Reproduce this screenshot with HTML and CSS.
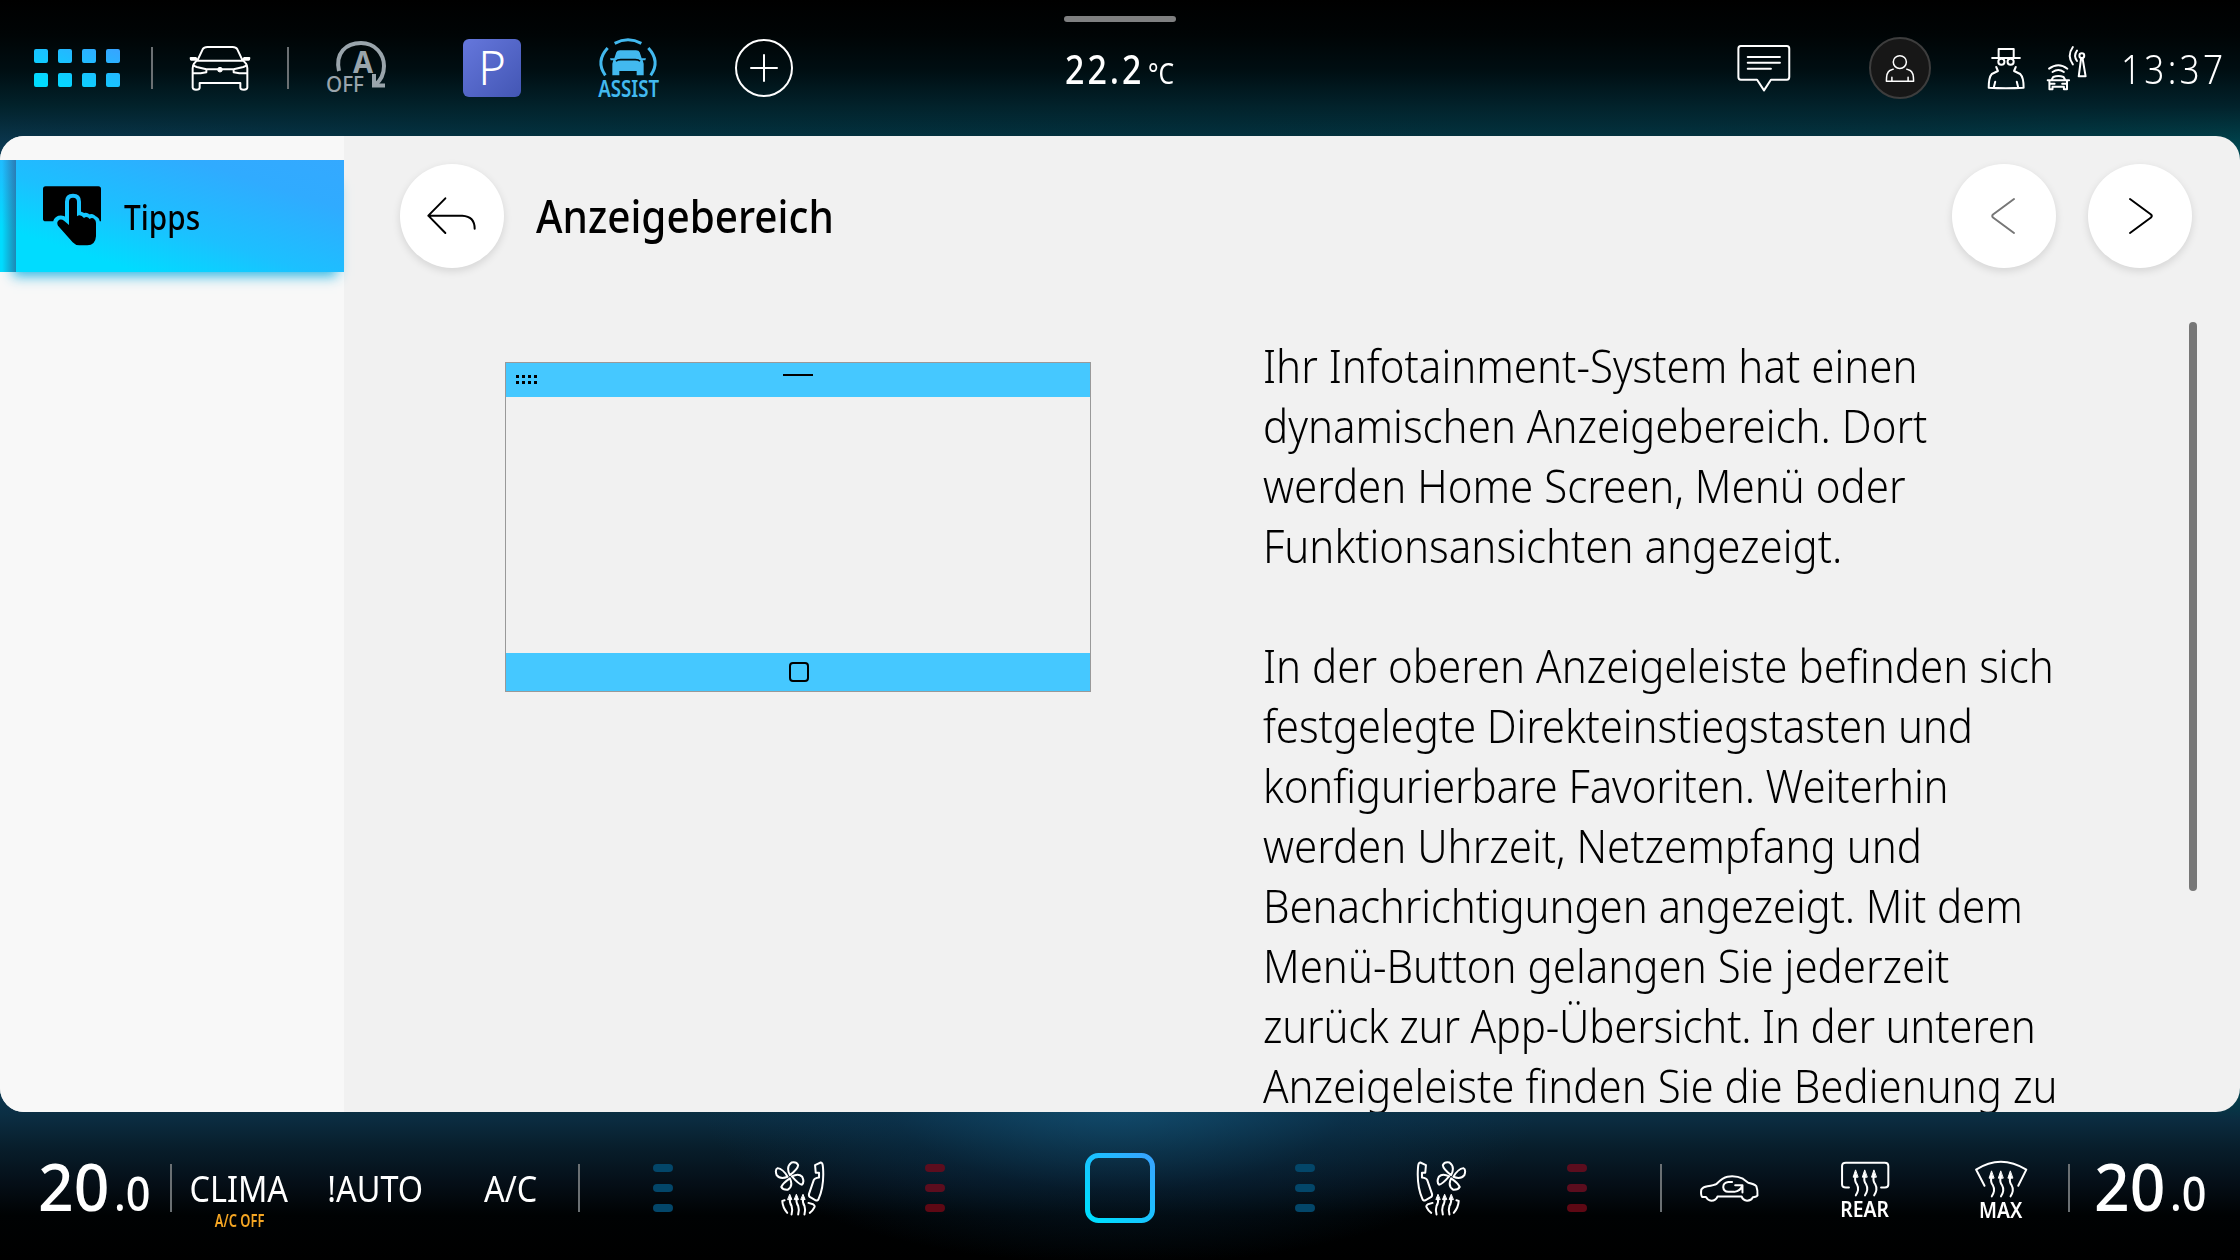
FILE: index.html
```html
<!DOCTYPE html>
<html lang="de">
<head>
<meta charset="utf-8">
<title>Tipps – Anzeigebereich</title>
<link rel="stylesheet" href="styles.css">
</head>
<body>
<svg class="defs" aria-hidden="true">
  <defs>
    <linearGradient id="accent" x1="0" y1="1" x2="1" y2="0">
      <stop offset="0.1" stop-color="#00dcff"/><stop offset="1" stop-color="#38a3ff"/>
    </linearGradient>
    <symbol id="seat" viewBox="528 212 154 168">
      <path d="M541 219Q535 218 534 235Q530 290 547 328Q550 336 556 333L574 323Q578 319 576 313L562 272Q560 266 546 264V250H556L558 227Z"/>
      <path d="M634 257Q610 239 609 227Q614 216 629 219Q647 232 634 257ZM641 262Q655 238 671 236Q680 240 674 257Q663 271 641 262ZM634 267Q655 281 660 293Q655 302 640 301Q623 290 634 267ZM628 261Q606 286 598 286Q589 278 597 262Q608 250 628 261Z"/>
      <path d="M594 326Q597 340 590 350Q586 362 590 376M614 326Q616 340 609 350Q605 362 609 376M634 326Q636 340 629 350Q625 362 629 376"/>
      <path class="solid" d="M594 316L588 331H600ZM614 316L608 331H620ZM634 316L628 331H640Z"/>
      <path d="M578 341L564 345Q557 350 560 354Q566 366 574 371M650 333L657 335Q656 355 642 371"/>
    </symbol>
  </defs>
</svg>

<div class="screen">
  <header class="topbar">
    <nav class="shortcuts">
      <div class="cell first">
        <svg width="86" height="38" viewBox="0 0 86 38"><path fill="url(#accent)" d="M2 0h10q2 0 2 2v10q0 2-2 2h-10q-2 0-2-2v-10q0-2 2-2zM26 0h10q2 0 2 2v10q0 2-2 2h-10q-2 0-2-2v-10q0-2 2-2zM50 0h10q2 0 2 2v10q0 2-2 2h-10q-2 0-2-2v-10q0-2 2-2zM74 0h10q2 0 2 2v10q0 2-2 2h-10q-2 0-2-2v-10q0-2 2-2zM2 24h10q2 0 2 2v10q0 2-2 2h-10q-2 0-2-2v-10q0-2 2-2zM26 24h10q2 0 2 2v10q0 2-2 2h-10q-2 0-2-2v-10q0-2 2-2zM50 24h10q2 0 2 2v10q0 2-2 2h-10q-2 0-2-2v-10q0-2 2-2zM74 24h10q2 0 2 2v10q0 2-2 2h-10q-2 0-2-2v-10q0-2 2-2z"/></svg>
      </div>
      <i class="sep"></i>
      <div class="cell">
        <svg class="line" width="60" height="45" viewBox="570 137 180 135">
          <path d="M592 181L608 147Q612 140 622 140H698Q708 140 712 147L728 181ZM590 181L582 190Q578 196 578 204V262Q579 268 588 268Q599 268 599 262V248H721V262Q721 268 732 268Q741 268 742 262V204Q742 196 738 190L730 181"/>
          <path d="M592 179L587 173H572L573 178H588M728 179L733 173H748L747 178H732"/>
          <path d="M581 196L590 200L619 207V216L602 219H579M739 196L730 200L701 207V216L718 219H741M619 207H701"/>
          <circle class="solid" cx="660" cy="208" r="7"/>
        </svg>
      </div>
      <i class="sep"></i>
      <div class="cell">
        <svg class="startstop" width="60" height="54" viewBox="0 0 60 54">
          <path d="M13 30C9 12 20 2 35 2C49 2 58 13 58 25C58 34 54 40 49 44M48 33V44.500H59"/>
          <text x="27" y="32" font-size="31" font-weight="700" textLength="20" lengthAdjust="spacingAndGlyphs">A</text>
          <text x="0" y="51" font-size="22" font-weight="500" textLength="38" lengthAdjust="spacingAndGlyphs">OFF</text>
        </svg>
      </div>
      <div class="cell"><span class="park">P</span></div>
      <div class="cell">
        <svg class="assist" width="62" height="60" viewBox="531 113 186 180">
          <g class="arcs"><path d="M584 129Q624 108 664 129"/><path d="M563 143Q526 183 556 225"/><path d="M685 143Q722 183 692 225"/></g>
          <path d="M589 156Q591 150 600 150H648Q657 150 659 156L665 174H678L676 180H668L671 190V225H650V212H598V225H577V190L580 180H572L570 174H583Z"/>
          <path class="gap" d="M588 183Q592 178 602 178H646Q656 178 660 183"/>
          <text x="535" y="291" font-size="68" font-weight="600" textLength="182" lengthAdjust="spacingAndGlyphs">ASSIST</text>
        </svg>
      </div>
      <div class="cell">
        <svg class="line" width="60" height="60" viewBox="0 0 60 60"><circle cx="30" cy="30" r="28"/><path d="M30 17V43M17 30H43"/></svg>
      </div>
    </nav>

    <div class="outside">
      <span class="grip"></span>
      <span class="fit t222">22.2</span><span class="fit tdeg">°C</span>
    </div>

    <div class="status">
      <div class="cell">
        <svg class="line" width="54" height="48" viewBox="108 132 156 145" preserveAspectRatio="none">
          <path d="M119 138H252Q259 138 259 146V232Q259 240 252 240H206L186 272L166 240H119Q112 240 112 232V146Q112 138 119 138ZM139 171H232M139 189H232M139 207H206"/>
        </svg>
      </div>
      <div class="cell">
        <span class="avatar">
          <svg class="line thin" width="30" height="29" viewBox="537 162 87 86" preserveAspectRatio="none"><path d="M561 207L551 211Q541 216 541 243H620Q620 216 610 211L600 207M557 231V243M604 231V243"/><ellipse cx="580" cy="186" rx="19" ry="19"/></svg>
        </span>
      </div>
      <svg class="line spy" width="38" height="43" viewBox="833 141 111 129" preserveAspectRatio="none"><path d="M867 174V147H911V174M848 174H929"/><ellipse cx="875" cy="185" rx="9" ry="9"/><ellipse cx="902" cy="185" rx="9" ry="9"/><path d="M860 201L865 213L847 222Q838 232 838 263Q888 266 940 263Q940 232 930 222L912 213L917 201M857 245L853 262M920 245L924 262"/></svg>
      <svg class="line ant" width="40" height="45" viewBox="1005 135 116 135" preserveAspectRatio="none"><path d="M1011 203Q1038 182 1064 203M1021 213Q1038 201 1054 213M1018 237L1023 228Q1038 222 1053 228L1058 237M1007 238H1069M1012 240V265H1021V257H1054V265H1063V240M1014 248H1027M1049 248H1062"/><path d="M1104 171L1097 226H1117L1108 171M1080 138Q1062 164 1080 190M1092 149Q1081 164 1092 180"/><ellipse cx="1106" cy="164" rx="7" ry="7"/></svg>
      <span class="fit clock">13:37</span>
    </div>
  </header>

  <main class="panel">
    <aside class="sidebar">
      <div class="tab">
        <svg class="touch" width="60" height="60" viewBox="126 557 180 180">
          <mask id="cut"><rect x="120" y="550" width="190" height="190" fill="#fff"/><path fill="#000" stroke="#000" stroke-width="24" stroke-linejoin="round" d="M207 604Q207 592 219 592Q231 592 231 604V648Q240 640 249 652Q258 646 265 656Q275 650 280 658Q288 660 288 668V708Q288 735 262 735H238L174 676Q168 664 178 658Q186 656 192 661L207 674Z"/></mask>
          <path mask="url(#cut)" d="M137 558H295Q303 558 303 566V663H137Q129 663 129 655V566Q129 558 137 558Z"/>
          <path d="M207 604Q207 592 219 592Q231 592 231 604V648Q241 640 252 653Q261 646 269 656Q277 650 283 657Q288 660 288 668V708Q286 735 262 735H238Q226 735 218 726L174 676Q168 664 178 658Q186 656 192 661L207 674Z"/>
        </svg>
        <span class="fit tipps">Tipps</span>
      </div>
    </aside>

    <section class="content">
      <div class="heading">
        <button class="round" aria-label="Zurück"><svg class="line dark" width="50" height="38" viewBox="22 592 150 114"><path d="M77 596L26 648L77 700M26 648H128Q165 650 165 687"/></svg></button>
        <h1 class="fit">Anzeigebereich</h1>
        <button class="round prev" aria-label="Vorherige"><svg class="line dark" width="26" height="38" viewBox="1 0 26 38"><path d="M24 2L3 17.500Q1.500 19 3 20.500L24 36"/></svg></button>
        <button class="round next" aria-label="Nächste"><svg class="line dark" width="26" height="38" viewBox="-1 0 26 38"><path d="M2 2L23 17.500Q24.500 19 23 20.500L2 36"/></svg></button>
      </div>
      <div class="article">
        <figure class="diagram">
          <div class="dtop"><span class="dots"><i></i><i></i><i></i><i></i><i></i><i></i><i></i><i></i></span><span class="dash"></span></div>
          <div class="dbottom"><span class="dhome"></span></div>
        </figure>
        <div class="text">
          <p>Ihr Infotainment-System hat einen<br>dynamischen Anzeigebereich. Dort<br>werden Home Screen, Menü oder<br>Funktionsansichten angezeigt.</p>
          <p>In der oberen Anzeigeleiste befinden sich<br><span class="tight">festgelegte Direkteinstiegstasten und</span><br><span class="tight">konfigurierbare Favoriten. Weiterhin</span><br>werden Uhrzeit, Netzempfang und<br><span class="tight">Benachrichtigungen angezeigt. Mit dem</span><br>Menü-Button gelangen Sie jederzeit<br><span class="tighter">zurück zur App-Übersicht. In der unteren</span><br>Anzeigeleiste finden Sie die Bedienung zu</p>
        </div>
        <span class="scroll"></span>
      </div>
    </section>
  </main>

  <footer class="climate">
    <div class="temp"><span class="fit big">20</span><span class="fit small">.0</span></div>
    <i class="sep"></i>
    <div class="cell"><span class="fit label">CLIMA</span><span class="fit note">A/C OFF</span></div>
    <div class="cell"><span class="fit label">!AUTO</span></div>
    <div class="cell"><span class="fit label ac">A/C</span></div>
    <i class="sep"></i>
    <div class="zone left">
      <div class="cell"><span class="bars cold"><i></i><i></i><i></i></span></div>
      <div class="cell"><svg class="line mirror" width="51" height="56"><use href="#seat"/></svg></div>
      <div class="cell"><span class="bars hot"><i></i><i></i><i></i></span></div>
    </div>
    <div class="home">
      <svg width="70" height="70" viewBox="0 0 70 70"><rect x="2.500" y="2.500" width="65" height="65" rx="11" fill="none" stroke="url(#accent)" stroke-width="5"/></svg>
    </div>
    <div class="zone right">
      <div class="cell"><span class="bars cold"><i></i><i></i><i></i></span></div>
      <div class="cell"><svg class="line" width="51" height="56"><use href="#seat"/></svg></div>
      <div class="cell"><span class="bars hot"><i></i><i></i><i></i></span></div>
    </div>
    <i class="sep"></i>
    <div class="cell">
      <svg class="line" width="60" height="29" viewBox="154 248 156 86" preserveAspectRatio="none"><path d="M172 316H162Q158 310 160 294Q164 286 176 284Q194 281 200 277Q216 258 228 256Q250 252 268 262L282 274Q298 278 303 284Q307 296 306 312Q304 316 294 317Q290 327 279 327Q268 326 265 315H202Q198 327 186 327Q176 326 172 316Z"/><path d="M240 272H230Q217 274 217 287Q218 300 230 301H246Q262 298 266 284M248 281H267V303"/></svg>
    </div>
    <div class="cell defrost">
      <svg class="line" width="52" height="37" viewBox="520 208 136 112" preserveAspectRatio="none"><path d="M546 291H538Q528 291 528 282V226Q528 216 538 216H640Q649 216 649 226V282Q649 291 640 291H630M563 258Q560 272 567 282Q574 296 564 315M587 258Q584 272 591 282Q598 296 588 315M611 258Q608 272 615 282Q622 296 612 315"/><path class="solid" d="M563 239L557 260H569ZM587 239L581 260H593ZM611 239L605 260H617Z"/></svg>
      <span class="fit">REAR</span>
    </div>
    <div class="cell defrost">
      <svg class="line" width="56" height="39" viewBox="870 202 146 118" preserveAspectRatio="none"><path d="M900 283L878 234Q942 186 1009 234L988 283M918 258Q915 272 922 282Q929 296 919 315M942 258Q939 272 946 282Q953 296 943 315M967 258Q964 272 971 282Q978 296 968 315"/><path class="solid" d="M918 239L912 260H924ZM942 239L936 260H948ZM967 239L961 260H973Z"/></svg>
      <span class="fit">MAX</span>
    </div>
    <i class="sep"></i>
    <div class="temp end"><span class="fit big">20</span><span class="fit small">.0</span></div>
  </footer>
</div>
</body>
</html>
```
FILE: styles.css
```css
* { box-sizing: border-box; }

body {
  margin: 0;
  background: #000;
  font-family: "Noto Sans", "Open Sans", sans-serif;
  color: #fff;
}

.defs { position: absolute; width: 0; height: 0; }

.screen {
  width: 2240px;
  height: 1260px;
  display: flex;
  flex-direction: column;
  overflow: hidden;
  background:
    radial-gradient(ellipse 420px 165px at 1120px 1100px, rgba(22, 96, 138, .6), rgba(12, 60, 95, .3) 55%, transparent),
    linear-gradient(180deg, #000 0, #000405 34px, #000e12 70px, #02222b 106px, transparent 150px),
    linear-gradient(0deg, #000 0, #000203 45px, #050f18 78px, #081f2d 115px, #0b2c40 140px, transparent 175px),
    linear-gradient(90deg, #0c3a54, #033848 25%, #033745 55%, #043a48 85%, #004852);
}

/* Condensed lettering of the display typeface */
.fit {
  display: inline-block;
  white-space: nowrap;
  transform: scaleX(var(--x, .9));
}

.cell {
  position: relative;
  width: 136px;
  flex: none;
  display: flex;
  align-items: center;
  justify-content: center;
}

.sep { width: 2px; margin: 0 -1px; background: #6b7073; flex: none; }

.line { fill: none; stroke: #fff; stroke-width: 2; stroke-linejoin: round; stroke-linecap: round; overflow: visible; }
.line path, .line circle, .line ellipse, #seat path { vector-effect: non-scaling-stroke; }
.line .solid, #seat .solid { fill: #fff; stroke-width: 1; }
.thin { stroke-width: 1.5; }
.dark { stroke: #000; }
.mirror { transform: scaleX(-1); }

/* Top bar */
.topbar {
  height: 136px;
  flex: none;
  display: grid;
  grid-template-columns: 1064px 112px 1fr;
}
.shortcuts, .status { display: flex; align-items: center; }
.shortcuts .first { width: 152px; padding-left: 2px; }
.shortcuts .sep { height: 42px; }
.startstop { fill: #9aa5ac; overflow: visible; }
.startstop path { fill: none; stroke: #9aa5ac; stroke-width: 4; }
.park {
  width: 58px;
  height: 58px;
  border-radius: 6px;
  background: linear-gradient(135deg, #6577dc, #4356b4);
  font-size: 47px;
  font-weight: 300;
  line-height: 56px;
  text-align: center;
}
.assist { fill: #42b9ef; overflow: visible; }
.assist .arcs { fill: none; stroke: #42b9ef; stroke-width: 9; }
.assist .gap { fill: none; stroke: #010c10; stroke-width: 5; }

.outside { position: relative; display: flex; align-items: center; padding-left: 1px; }
.grip { position: absolute; left: 0; top: 16px; width: 112px; height: 6px; border-radius: 3px; background: #7f8081; }
.t222 { --x: .85; font-size: 40px; font-weight: 500; letter-spacing: 3.5px; transform-origin: left; width: 83px; }
.tdeg { --x: .85; font-size: 29px; transform-origin: left; padding-top: 8px; }

.status { padding-left: 520px; }
.avatar {
  width: 62px;
  height: 62px;
  border: 2px solid #3d3d3d;
  border-radius: 50%;
  background: #171717;
  display: flex;
  align-items: center;
  justify-content: center;
}
.spy { margin-left: 19px; }
.ant { margin-left: 22px; }
.clock { --x: .88; margin-left: 34px; font-size: 40px; font-weight: 300; letter-spacing: 3.7px; transform-origin: left; }

/* Panel */
.panel {
  height: 976px;
  flex: none;
  display: flex;
  border-radius: 24px;
  overflow: hidden;
  background: #f1f1f1;
  color: #000;
}
.sidebar { width: 344px; padding-top: 24px; background: #f8f8f8; }
.tab {
  height: 112px;
  padding-left: 42px;
  display: flex;
  align-items: center;
  background:
    linear-gradient(90deg, transparent 2px, rgba(50, 80, 130, .6) 16px, transparent 16px) 0 0 / 100% 100%,
    linear-gradient(18deg, #00dcff 20%, #1cc0ff 45%, #30abff 78%, #34a9ff);
  box-shadow: 3px 14px 12px -10px rgba(20, 175, 225, .9);
}
.tipps { --x: .85; margin-left: 22px; font-size: 35px; font-weight: 500; transform-origin: left; }

.content { flex: 1; min-width: 0; display: flex; flex-direction: column; }
.heading { height: 160px; flex: none; display: flex; align-items: center; padding: 0 48px 0 56px; }
.round {
  width: 104px;
  height: 104px;
  flex: none;
  padding: 0;
  border: 0;
  border-radius: 50%;
  background: #fff;
  box-shadow: 0 3px 8px rgba(0, 0, 0, .12);
  display: flex;
  align-items: center;
  justify-content: center;
}
.prev { margin-left: auto; }
.prev svg { stroke: #777; }
.next { margin-left: 32px; }
.heading h1 { --x: .88; margin: 0 0 3px 32px; font-size: 46px; font-weight: 500; transform-origin: left; }

.article { flex: 1; min-height: 0; display: flex; align-items: flex-start; overflow: hidden; }
.diagram {
  width: 586px;
  height: 330px;
  flex: none;
  margin: 66px 0 0 161px;
  border: 1px solid #999;
  display: flex;
  flex-direction: column;
  justify-content: space-between;
}
.dtop { height: 34px; padding: 11px 0 0 10px; display: flex; background: #45c8ff; }
.dots { display: grid; grid-template-columns: repeat(4, 3px); grid-auto-rows: 3px; gap: 3px; width: 267px; margin-top: 1px; }
.dots i { background: #000; }
.dash { width: 30px; height: 2px; background: #000; }
.dbottom { height: 38px; padding-left: 2px; display: flex; align-items: center; justify-content: center; background: #45c8ff; }
.dhome { width: 20px; height: 20px; border: 2px solid #000; border-radius: 4px; }

.text {
  width: 880px;
  margin: 39px 0 0 172px;
  font-size: 46px;
  font-weight: 300;
  line-height: 60px;
  white-space: nowrap;
  transform: scaleX(.914);
  transform-origin: left;
}
.text p { margin: 0 0 60px; }
.tight { letter-spacing: -.13px; }
.tighter { letter-spacing: -.24px; }
.scroll { flex: none; width: 8px; height: 569px; margin: 26px 0 0 46px; border-radius: 4px; background: #777; }

/* Climate bar */
.climate { height: 148px; flex: none; display: flex; align-items: center; padding-top: 4px; }
.climate .sep { height: 48px; }
.temp { width: 171px; flex: none; padding: 0 0 4px 38px; display: flex; align-items: baseline; }
.temp.end { padding-left: 25px; }
.big { --x: .96; font-size: 65px; font-weight: 500; transform-origin: left; width: 76px; }
.small { --x: .92; font-size: 47px; font-weight: 500; transform-origin: left; }
.label { --x: .9; font-size: 36px; }
.note { --x: .76; position: absolute; left: 36px; top: 45px; font-size: 17px; font-weight: 600; color: #f5a623; }
.zone { display: flex; }
.zone.left { margin-left: 16px; }
.zone.right { margin-right: 16px; }
.bars { display: flex; flex-direction: column; gap: 12px; }
.bars i { width: 20px; height: 8px; border-radius: 4px; }
.cold i { background: #034669; }
.hot i { background: #5c0d1e; }
.hot i:last-child { background: #5e0814; }
.home { flex: 1; display: flex; justify-content: center; }
.defrost { flex-direction: column; padding-top: 3px; }
.defrost .fit { --x: .88; font-size: 22px; font-weight: 600; line-height: 22px; }
```
